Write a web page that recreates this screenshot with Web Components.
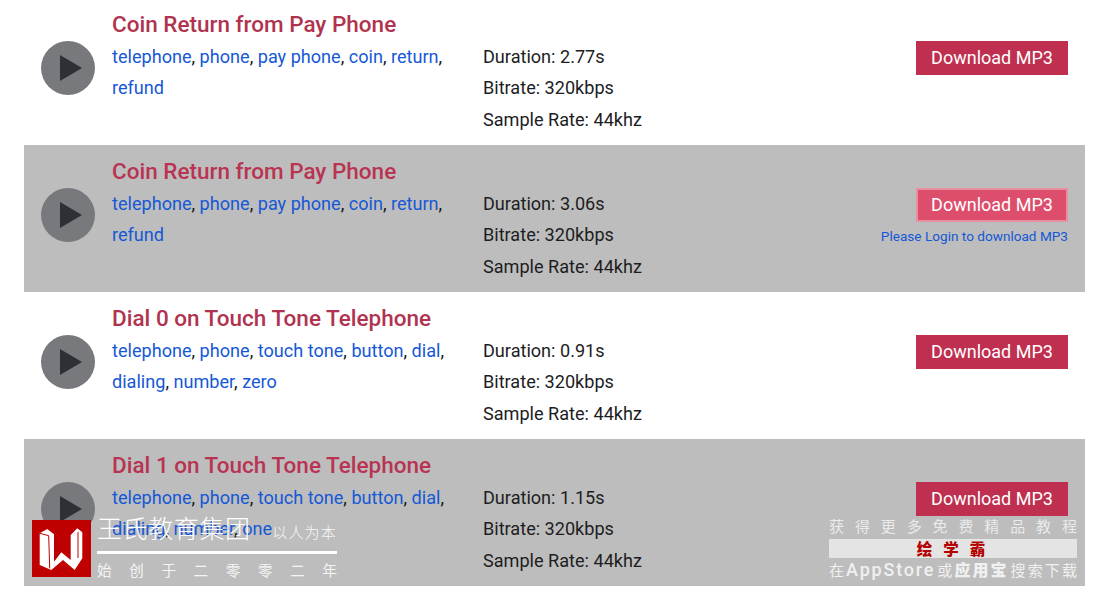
<!DOCTYPE html>
<html><head><meta charset="utf-8">
<style>
html,body{margin:0;padding:0;background:#fff;height:600px;overflow:hidden}
body{font-family:Roboto,"Liberation Sans",sans-serif;position:relative}
sound-list{margin:-2px 24px 0 24px}
</style></head><body>
<template id="row-t">
<style>
:host{display:grid;grid-template-columns:88px 371px 1fr;height:147px;box-sizing:border-box;padding:13px 17px 0 0;color:#1d1d1f;font-size:18.1px;line-height:31.5px}
:host([alt]){background:#bdbdbd}
.play{width:54px;height:54px;border-radius:50%;background:#78797d;margin:30px 0 0 17px;display:flex;align-items:center;justify-content:center}
.play svg{display:block;margin-left:6px}
h3{margin:0;font:500 22.5px/26px Roboto,sans-serif;color:#b03350;padding-bottom:3.5px}
:host([alt]) h3{color:#b93452}
.tags{width:340px;color:#111}
::slotted(a){color:#1558d6;text-decoration:none}
.meta{padding-top:29.5px}
.act{display:flex;flex-direction:column;align-items:flex-end;padding-top:30px;width:152px;justify-self:end}
.btn{width:152px;height:34px;background:#bf2f4f;color:#fff;font-size:18px;line-height:34px;text-align:center;box-sizing:border-box}
:host([hot]) .btn{background:#dc4e6c;border:2px solid #e98fa2;line-height:30px}
.login{display:none;font-size:13.6px;line-height:20px;color:#1558d6;margin-top:4px;white-space:nowrap}
:host([hot]) .login{display:block}
.c2{display:grid;grid-template-columns:1fr 152px}
</style>
<div class="play"><svg width="24" height="26" viewBox="0 0 24 26"><path d="M1 0 L23 13 L1 26 Z" fill="#2f3036"/></svg></div>
<div><h3><slot name="title"></slot></h3><div class="tags"><slot></slot></div></div>
<div class="c2"><div class="meta"><slot name="meta"></slot></div>
<div class="act"><div class="btn">Download MP3</div><div class="login">Please Login to download MP3</div></div></div>
</template>
<template id="list-t"><style>:host{display:block}</style><slot></slot></template>
<template id="wm-t">
<style>
:host{position:absolute;left:0;top:0;width:1109px;height:600px;display:block;color:#fff;font-family:"Noto Sans CJK SC",sans-serif;pointer-events:none}
.logo{position:absolute;left:32px;top:520px;width:59px;height:57px;background:#bf0000}
.logo svg{display:block}
.brand{position:absolute;left:97px;top:507px;width:240px}
.name{font-size:25px;line-height:30px;letter-spacing:.6px;font-weight:300;white-space:nowrap;display:flex;align-items:center;justify-content:space-between}
.sl{font-size:15px;letter-spacing:1.2px;opacity:.9;margin-top:10px}
.rule{height:3px;background:#fff;margin-top:4px}
.since{display:flex;justify-content:space-between;font-size:14.5px;line-height:20px;margin-top:6px;opacity:.85}
.dl{position:absolute;left:829px;top:515px;width:248px;font-size:15px;color:#f0f0f0}
.top{display:flex;justify-content:space-between;line-height:21px;opacity:.9}
.bar{background:#e4e4e4;height:19px;margin-top:3px;color:#b40000;font-weight:900;font-size:15.5px;line-height:19px;letter-spacing:11px;text-indent:7px;text-align:center}
.bot{display:flex;justify-content:space-between;align-items:center;line-height:23px;white-space:nowrap}
.bot b{font-family:Roboto,sans-serif;font-weight:500;font-size:18px;letter-spacing:1.8px}
.bot strong{font-weight:900;font-size:16px;letter-spacing:2px}
</style>
<div class="logo"><svg width="59" height="57" viewBox="0 0 59 57"><path d="M7.7 13.3 L15.3 9 L22 14.3 L22 41.7 L29.3 32.3 L38.7 40 L38.7 15 L45.3 8.3 L50.3 12.3 L50.3 38.3 L42.7 50 L31 40 L19.3 50 L7.7 45 Z" fill="#fff"/><path d="M7.7 13.3 L16.7 15.7 L17.7 48.3 M46 12 L46 38" stroke="#bf0000" stroke-width="1" fill="none"/></svg></div>
<div class="brand"><div class="name"><span>王氏教育集团</span><span class="sl">以人为本</span></div><div class="rule"></div>
<div class="since"><span>始</span><span>创</span><span>于</span><span>二</span><span>零</span><span>零</span><span>二</span><span>年</span></div></div>
<div class="dl"><div class="top"><span>获</span><span>得</span><span>更</span><span>多</span><span>免</span><span>费</span><span>精</span><span>品</span><span>教</span><span>程</span></div>
<div class="bar">绘学霸</div>
<div class="bot"><span>在</span><b>AppStore</b><span>或</span><strong>应用宝</strong><span>搜</span><span>索</span><span>下</span><span>载</span></div></div>
</template>
<sound-list>
<sound-row><span slot="title">Coin Return from Pay Phone</span><a>telephone</a>, <a>phone</a>, <a>pay phone</a>, <a>coin</a>, <a>return</a>, <a>refund</a><div slot="meta">Duration: 2.77s</div><div slot="meta">Bitrate: 320kbps</div><div slot="meta">Sample Rate: 44khz</div></sound-row>
<sound-row alt hot><span slot="title">Coin Return from Pay Phone</span><a>telephone</a>, <a>phone</a>, <a>pay phone</a>, <a>coin</a>, <a>return</a>, <a>refund</a><div slot="meta">Duration: 3.06s</div><div slot="meta">Bitrate: 320kbps</div><div slot="meta">Sample Rate: 44khz</div></sound-row>
<sound-row><span slot="title">Dial 0 on Touch Tone Telephone</span><a>telephone</a>, <a>phone</a>, <a>touch tone</a>, <a>button</a>, <a>dial</a>, <a>dialing</a>, <a>number</a>, <a>zero</a><div slot="meta">Duration: 0.91s</div><div slot="meta">Bitrate: 320kbps</div><div slot="meta">Sample Rate: 44khz</div></sound-row>
<sound-row alt><span slot="title">Dial 1 on Touch Tone Telephone</span><a>telephone</a>, <a>phone</a>, <a>touch tone</a>, <a>button</a>, <a>dial</a>, <a>dialing</a>, <a>number</a>, <a>one</a><div slot="meta">Duration: 1.15s</div><div slot="meta">Bitrate: 320kbps</div><div slot="meta">Sample Rate: 44khz</div></sound-row>
</sound-list>
<water-mark></water-mark>
<script>
function def(n,t){customElements.define(n,class extends HTMLElement{constructor(){super();this.attachShadow({mode:'open'}).appendChild(document.getElementById(t).content.cloneNode(true))}})}
def('sound-list','list-t');def('sound-row','row-t');def('water-mark','wm-t');
</script>
</body></html>
